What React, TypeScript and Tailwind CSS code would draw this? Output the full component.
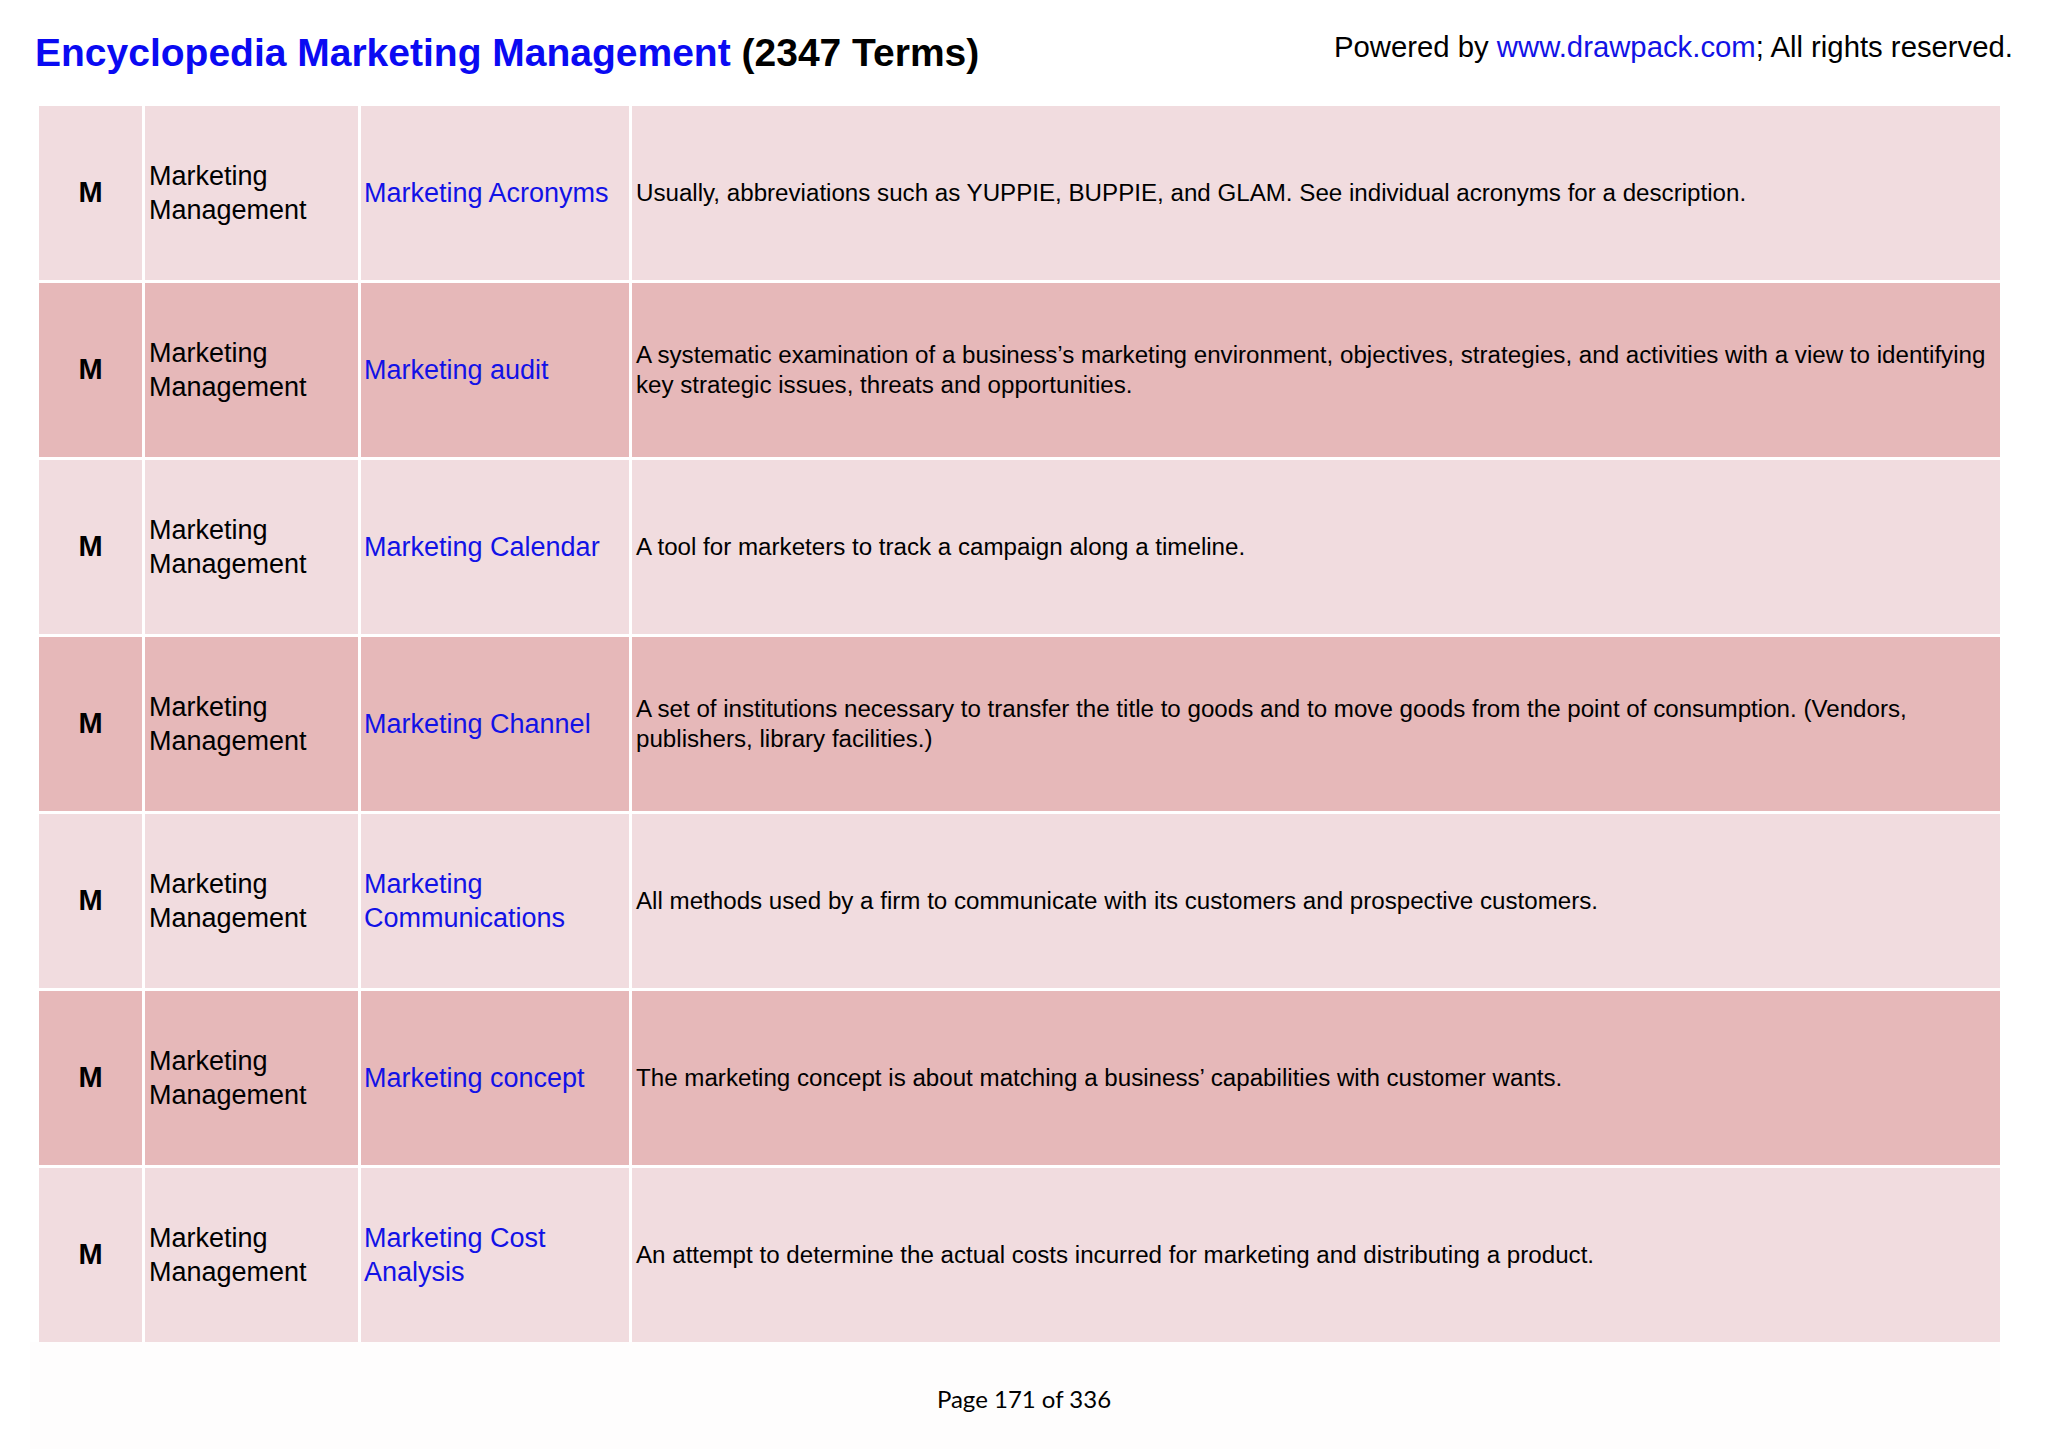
import React from 'react';

type Term = {
  letter: string;
  category: string;
  term: string;
  description: string;
};

const terms: Term[] = [
  {
    letter: 'M',
    category: 'Marketing Management',
    term: 'Marketing Acronyms',
    description:
      'Usually, abbreviations such as YUPPIE, BUPPIE, and GLAM. See individual acronyms for a description.',
  },
  {
    letter: 'M',
    category: 'Marketing Management',
    term: 'Marketing audit',
    description:
      'A systematic examination of a business\u2019s marketing environment, objectives, strategies, and activities with a view to identifying key strategic issues, threats and opportunities.',
  },
  {
    letter: 'M',
    category: 'Marketing Management',
    term: 'Marketing Calendar',
    description: 'A tool for marketers to track a campaign along a timeline.',
  },
  {
    letter: 'M',
    category: 'Marketing Management',
    term: 'Marketing Channel',
    description:
      'A set of institutions necessary to transfer the title to goods and to move goods from the point of consumption. (Vendors, publishers, library facilities.)',
  },
  {
    letter: 'M',
    category: 'Marketing Management',
    term: 'Marketing Communications',
    description:
      'All methods used by a firm to communicate with its customers and prospective customers.',
  },
  {
    letter: 'M',
    category: 'Marketing Management',
    term: 'Marketing concept',
    description:
      'The marketing concept is about matching a business\u2019 capabilities with customer wants.',
  },
  {
    letter: 'M',
    category: 'Marketing Management',
    term: 'Marketing Cost Analysis',
    description:
      'An attempt to determine the actual costs incurred for marketing and distributing a product.',
  },
];

function TermRow({ item, dark }: { item: Term; dark: boolean }) {
  const bg = dark ? 'bg-[#e6b8b9]' : 'bg-[#f1dcdf]';
  return (
    <div className="grid h-[174px] grid-cols-[103px_213px_268px_1fr] gap-x-[3px]">
      <div className={`flex items-center justify-center ${bg}`}>
        <span className="text-[29px] font-bold text-black">{item.letter}</span>
      </div>
      <div className={`flex items-center px-[4px] ${bg}`}>
        <span className="text-[27px] leading-[34px] text-black">
          Marketing
          <br />
          Management
        </span>
      </div>
      <div className={`flex items-center px-[3px] ${bg}`}>
        <span className="text-[27px] leading-[34px] text-[#1212e6]">{item.term}</span>
      </div>
      <div className={`flex items-center pl-[4px] pr-[2px] ${bg}`}>
        <p className="text-[24.15px] leading-[30px] text-black">{item.description}</p>
      </div>
    </div>
  );
}

export default function App() {
  return (
    <div className="h-[1449px] w-[2048px] overflow-hidden bg-white font-['Liberation_Sans',Arial,sans-serif]">
      {/* Header */}
      <header className="flex h-[106px] justify-between px-[35px]">
        <h1 className="pt-[32px] text-[39px] font-bold leading-[42px] text-black">
          <span className="text-[#0a0af2]">Encyclopedia Marketing Management</span> (2347 Terms)
        </h1>
        <p className="pt-[30px] text-[29.3px] leading-[33px] text-black">
          Powered by <span className="text-[#1212e6]">www.drawpack.com</span>; All rights reserved.
        </p>
      </header>

      {/* Terms table */}
      <main className="ml-[39px] flex w-[1961px] flex-col gap-y-[3px]">
        {terms.map((t, i) => (
          <TermRow key={t.term} item={t} dark={i % 2 === 1} />
        ))}
      </main>

      {/* Footer */}
      <footer className="ml-[30px] flex h-[107px] w-[1970px] items-center justify-center bg-[#fefdfd] pl-[18px] pt-[6px]">
        <span className="font-['Lato',sans-serif] text-[24px] text-black">Page 171 of 336</span>
      </footer>
    </div>
  );
}
